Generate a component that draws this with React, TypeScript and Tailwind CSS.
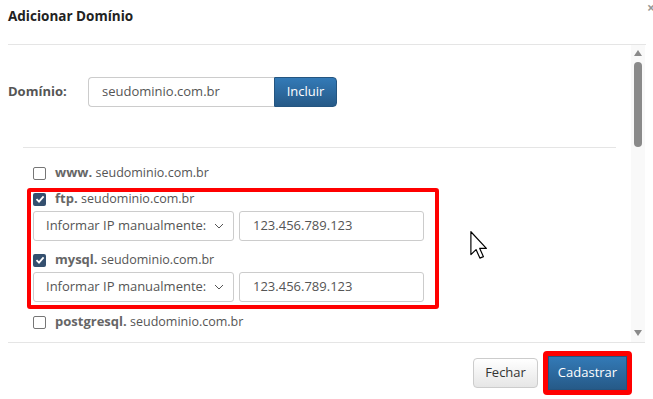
import React from "react";

const font = { fontFamily: '"Open Sans", "Liberation Sans", sans-serif' };

const Box = ({ checked }: { checked?: boolean }) =>
  checked ? (
    <span className="w-[13px] h-[13px] rounded-[2px] bg-[#35506f] flex items-center justify-center shrink-0">
      <svg width="10" height="10" viewBox="0 0 10 10">
        <path d="M1.5 5.2 L4 7.6 L8.6 2.4" stroke="#fff" strokeWidth="1.8" fill="none" />
      </svg>
    </span>
  ) : (
    <span className="w-[13px] h-[13px] rounded-[2px] border border-[#767676] bg-white shrink-0" />
  );

const Item = ({ prefix, checked }: { prefix: string; checked?: boolean }) => (
  <div className="flex items-center h-[14px] gap-[9px]">
    <Box checked={checked} />
    <span className="text-[#555] text-[13px] leading-none whitespace-nowrap">
      <b className="font-bold text-[#666]">{prefix}</b>{" "}
      <span className="text-[12.5px]">seudominio.com.br</span>
    </span>
  </div>
);

const IpRow = () => (
  <div className="flex gap-[5px] mt-[5px]">
    <div className="w-[201px] h-[30px] border border-[#ccc] rounded-[3px] flex items-center pl-[12px] pr-[9px] text-[13px] text-[#555]">
      <span className="flex-1">Informar IP manualmente:</span>
      <svg width="10" height="6" viewBox="0 0 10 6">
        <path d="M1 1 L5 5 L9 1" stroke="#555" strokeWidth="1" fill="none" />
      </svg>
    </div>
    <div className="w-[185px] h-[30px] border border-[#ccc] rounded-[3px] flex items-center pl-[13px] text-[13px] text-[#555]">
      123.456.789.123
    </div>
  </div>
);

export default function App() {
  return (
    <div className="w-[653px] h-[399px] bg-white relative overflow-hidden flex flex-col" style={font}>
      <span className="absolute top-[-3px] right-[-2px] text-[#999] font-bold text-[14px]">×</span>

      <div className="h-[45px] mx-2 mr-[7px] border-b border-[#e5e5e5] flex items-start pt-[6px] shrink-0">
        <h1 className="font-bold text-[13.5px] text-[#222]">Adicionar Domínio</h1>
      </div>

      <div className="h-[297px] flex ml-2 mr-[8px] shrink-0 overflow-hidden">
        <div className="flex-1 pt-[32px]">
          <div className="flex items-center">
            <span className="w-[80px] font-bold text-[13px] text-[#555]">Domínio:</span>
            <div className="w-[186px] h-[30px] border border-[#ccc] border-r-0 rounded-l-[4px] flex items-center pl-[13px] text-[13px] text-[#555]">
              seudominio.com.br
            </div>
            <button className="w-[63px] h-[30px] rounded-r-[4px] border border-[#245580] bg-gradient-to-b from-[#337ab7] to-[#265a88] text-white text-[13px]">
              Incluir
            </button>
          </div>

          <div className="mt-[40px] ml-[15px] mr-[15px] border-t border-[#e5e5e5]">
            <div className="ml-[10px] mt-[18px]">
              <Item prefix="www." />
            </div>
            <div className="ml-[4px] mt-[8px] w-[412px] border-[4px] border-[#ff0000] rounded-[3px] pl-[2px] pb-[3px]">
              <Item prefix="ftp." checked />
              <IpRow />
              <div className="mt-[12px]">
                <Item prefix="mysql." checked />
              </div>
              <IpRow />
            </div>
            <div className="ml-[10px] mt-[6px]">
              <Item prefix="postgresql." />
            </div>
          </div>
        </div>

        <div className="w-[14px] bg-[#f9f9f9] flex flex-col items-center">
          <svg width="8" height="6" viewBox="0 0 8 6" className="mt-[5px]">
            <path d="M4 0 L8 6 L0 6 Z" fill="#8a8a8a" />
          </svg>
          <div className="w-[8px] h-[85px] rounded-full bg-[#8a8a8a] mt-[6px]" />
          <div className="flex-1" />
          <svg width="8" height="6" viewBox="0 0 8 6" className="mb-[6px]">
            <path d="M0 0 L8 0 L4 6 Z" fill="#8a8a8a" />
          </svg>
        </div>
      </div>

      <div className="flex-1 ml-2 mr-[8px] border-t border-[#e5e5e5] flex items-start justify-end pt-[8px] pr-[13px] gap-[5px]">
        <button className="mt-[7px] w-[65px] h-[30px] rounded-[4px] border border-[#ccc] bg-gradient-to-b from-white to-[#e6e6e6] text-[#333] text-[13px]">
          Fechar
        </button>
        <div className="border-[5px] border-[#ff0000] rounded-[4px]">
          <button className="w-[79px] h-[34px] bg-gradient-to-b from-[#337ab7] to-[#265a88] text-white text-[13px] border border-[#245580]">
            Cadastrar
          </button>
        </div>
      </div>

      <svg className="absolute left-[470px] top-[231px]" width="18" height="28" viewBox="0 0 12 19">
        <path d="M0.5 0.5 L0.5 16 L4 12.6 L6.6 18.4 L9 17.4 L6.5 11.8 L11 11.8 Z" fill="#fff" stroke="#000" strokeWidth="0.8" strokeLinejoin="round" />
      </svg>
    </div>
  );
}
